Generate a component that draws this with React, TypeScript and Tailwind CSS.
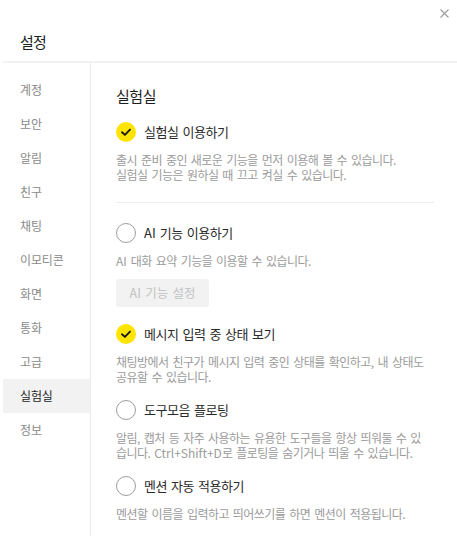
import React from "react";

const Checked = () => (
  <span className="w-[20px] h-[20px] rounded-full bg-[#fee500] flex items-center justify-center shrink-0">
    <svg width="20" height="20" viewBox="0 0 20 20" fill="none">
      <path d="M6 10.2 L8.9 12.9 L14 7.6" stroke="#1a1a1a" strokeWidth="1.9" strokeLinecap="round" strokeLinejoin="round" />
    </svg>
  </span>
);

const Unchecked = () => (
  <span className="w-[20px] h-[20px] rounded-full border border-[#9e9e9e] bg-white shrink-0" />
);

const Row = ({ checked, children }: { checked: boolean; children: React.ReactNode }) => (
  <div className="h-[20px] flex items-center gap-[8px]">
    {checked ? <Checked /> : <Unchecked />}
    <span className="text-[13px] leading-[20px] text-[#2a2a2a] tracking-[-0.035em] [word-spacing:0.12em]">{children}</span>
  </div>
);

const Desc = ({ children }: { children: React.ReactNode }) => (
  <p className="mt-[10px] text-[12px] leading-[15px] text-[#9b9b9b] tracking-[-0.045em] [word-spacing:0.15em] whitespace-nowrap">
    {children}
  </p>
);

const Latin = ({ children }: { children: React.ReactNode }) => (
  <span className="tracking-[0em]">{children}</span>
);

const menu = ["계정", "보안", "알림", "친구", "채팅", "이모티콘", "화면", "통화", "고급", "실험실", "정보"];

export default function App() {
  return (
    <div className="w-[457px] h-[536px] bg-white relative overflow-hidden font-['Noto_Sans_CJK_KR','Noto_Sans',sans-serif]">
      <button className="absolute top-[8px] left-[439px] w-[10px] h-[10px] flex items-center justify-center">
        <svg width="9" height="9" viewBox="0 0 9 9" fill="none">
          <path d="M0.5 0.5 L8.5 8.5 M8.5 0.5 L0.5 8.5" stroke="#9a9a9a" strokeWidth="1.1" />
        </svg>
      </button>

      <div className="h-[61px] pl-[20px] pt-[31px]">
        <h1 className="text-[15px] leading-[21px] text-[#1e1e1e] tracking-[-0.06em]">설정</h1>
      </div>
      <div className="ml-[3px] h-[2px] bg-[#f1f1f1]" />

      <div className="flex ml-[3px] h-[473px]">
        <nav className="w-[88px] border-r border-[#ebebeb] pt-[10px] shrink-0">
          {menu.map((m) => (
            <div
              key={m}
              className={
                m === "실험실"
                  ? "h-[34px] flex items-center pl-[17px] bg-[#f2f2f2] text-[12px] text-[#1e1e1e] tracking-[-0.01em]"
                  : "h-[34px] flex items-center pl-[17px] text-[12px] text-[#8a8a8a] tracking-[-0.01em]"
              }
            >
              {m}
            </div>
          ))}
        </nav>

        <main className="pl-[25px] pt-[23px] w-[344px]">
          <h2 className="text-[15px] leading-[20px] text-[#1e1e1e] tracking-[-0.03em]">실험실</h2>

          <div className="mt-[16px]">
            <Row checked>실험실 이용하기</Row>
            <Desc>
              출시 준비 중인 새로운 기능을 먼저 이용해 볼 수 있습니다.
              <br />
              실험실 기능은 원하실 때 끄고 켜실 수 있습니다.
            </Desc>
          </div>

          <div className="mt-[20px] h-px bg-[#ececec] w-[318px]" />

          <div className="mt-[20px]">
            <Row checked={false}>
              <Latin>AI</Latin> 기능 이용하기
            </Row>
            <Desc>
              <Latin>AI</Latin> 대화 요약 기능을 이용할 수 있습니다.
            </Desc>
            <button className="mt-[11px] h-[28px] w-[93px] flex items-center justify-center rounded-[3px] bg-[#f2f2f2] text-[12.5px] text-[#c2c2c2] tracking-[0em] [word-spacing:0.12em]">
              <Latin>AI</Latin>&nbsp;기능 설정
            </button>
          </div>

          <div className="mt-[17px]">
            <Row checked>메시지 입력 중 상태 보기</Row>
            <Desc>
              채팅방에서 친구가 메시지 입력 중인 상태를 확인하고, 내 상태도
              <br />
              공유할 수 있습니다.
            </Desc>
          </div>

          <div className="mt-[16px]">
            <Row checked={false}>도구모음 플로팅</Row>
            <Desc>
              알림, 캡처 등 자주 사용하는 유용한 도구들을 항상 띄워둘 수 있
              <br />
              습니다. <Latin>Ctrl+Shift+D</Latin>로 플로팅을 숨기거나 띄울 수 있습니다.
            </Desc>
          </div>

          <div className="mt-[16px]">
            <Row checked={false}>멘션 자동 적용하기</Row>
            <Desc>멘션할 이름을 입력하고 띄어쓰기를 하면 멘션이 적용됩니다.</Desc>
          </div>
        </main>
      </div>
    </div>
  );
}
